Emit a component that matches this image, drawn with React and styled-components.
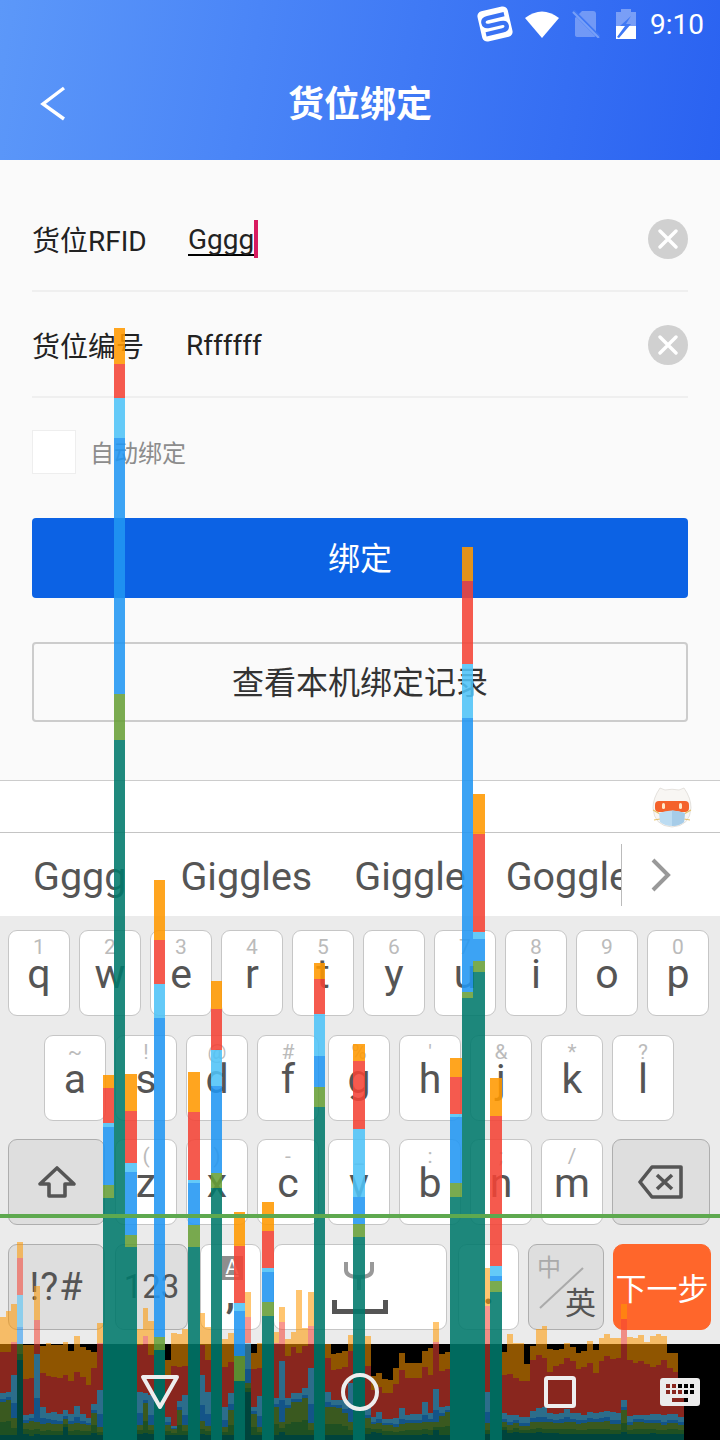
import React from 'react'
import styled, { createGlobalStyle } from 'styled-components'

const GlobalStyle = createGlobalStyle`
    html, body {
        margin: 0;
        padding: 0;
        background: #fafafa;
    }
    body {
        font-family: Roboto, "Noto Sans CJK SC", sans-serif;
    }
`

const Screen = styled.div`
    position: relative;
    width: 720px;
    height: 1440px;
    overflow: hidden;
    background: #fafafa;
    display: flex;
    flex-direction: column;
`

/* header */
const Header = styled.div`
    height: 160px;
    flex-shrink: 0;
    background: linear-gradient(100deg, #5c98f9 0%, #4a85f7 35%, #2a62f1 100%);
    display: flex;
    flex-direction: column;
`
const StatusBar = styled.div`
    height: 48px;
    display: flex;
    align-items: center;
    justify-content: flex-end;
    padding-right: 16px;
    color: #fff;
    svg { display: block; }
`
const Clock = styled.span`
    font-size: 28px;
    margin-left: 14px;
`
const TitleBar = styled.div`
    height: 112px;
    display: flex;
    align-items: center;
    position: relative;
    justify-content: center;
`
const BackIcon = styled.svg`
    position: absolute;
    left: 38px;
    top: 36px;
`
const Title = styled.h1`
    margin: 3px 0 0;
    font-size: 36px;
    font-weight: 700;
    color: #fff;
    line-height: 109px;
`

/* form */
const Form = styled.div`
    height: 620px;
    flex-shrink: 0;
    box-sizing: border-box;
    padding: 26px 32px 0;
    display: flex;
    flex-direction: column;
`
const Row = styled.div`
    height: 102px;
    padding-top: 2px;
    border-bottom: 2px solid #efefef;
    display: flex;
    align-items: center;
    color: #222;
    font-size: 28px;
`
const RowLabel = styled.div`
    width: 154px;
    flex-shrink: 0;
`
const RowValue = styled.div`
    flex: 1;
    display: flex;
    align-items: center;
    padding-left: ${props => props.$pad || 0}px;
`
const Composing = styled.span`
    text-decoration: underline;
    text-decoration-color: #000;
    text-decoration-thickness: 2px;
    text-underline-offset: 5px;
    text-decoration-skip-ink: none;
`
const Caret = styled.span`
    width: 4px;
    height: 38px;
    background: #d81b60;
`
const ClearButton = styled.div`
    width: 40px;
    height: 40px;
    border-radius: 50%;
    background: #d0d0d0;
    display: flex;
    align-items: center;
    justify-content: center;
`
const AutoRow = styled.div`
    display: flex;
    align-items: center;
    margin-top: 32px;
`
const Checkbox = styled.div`
    width: 42px;
    height: 42px;
    background: #fff;
    border: 1px solid #eee;
`
const AutoLabel = styled.span`
    margin-left: 14px;
    margin-bottom: 2px;
    font-size: 24px;
    color: #8c8c8c;
`
const PrimaryButton = styled.div`
    height: 76px;
    padding-bottom: 4px;
    margin-top: 44px;
    background: #0c62e4;
    border-radius: 4px;
    color: #fff;
    font-size: 32px;
    display: flex;
    align-items: center;
    justify-content: center;
`
const OutlineButton = styled.div`
    height: 72px;
    padding-bottom: 4px;
    margin-top: 44px;
    border: 2px solid #ccc;
    border-radius: 4px;
    color: #333;
    font-size: 32px;
    display: flex;
    align-items: center;
    justify-content: center;
`

/* input method */
const ToolStrip = styled.div`
    height: 51px;
    flex-shrink: 0;
    background: #fff;
    border-top: 1px solid #ccc;
    border-bottom: 1px solid #c4c4c4;
    display: flex;
    align-items: center;
    justify-content: flex-end;
    padding-right: 28px;
`
const CandidateBar = styled.div`
    height: 83px;
    flex-shrink: 0;
    background: #fff;
    display: flex;
    align-items: center;
`
const CandidateList = styled.div`
    width: 621px;
    height: 62px;
    overflow: hidden;
    display: flex;
    align-items: center;
    border-right: 1px solid #bbb;
    position: relative;
`
const Candidate = styled.span`
    flex-shrink: 0;
    font-size: 39.5px;
    color: #555;
    padding-top: 4px;
    margin-left: ${props => props.$ml}px;
`
const CandidateMore = styled.div`
    flex: 1;
    display: flex;
    justify-content: center;
    padding-right: 20px;
`
const Keyboard = styled.div`
    height: 428px;
    flex-shrink: 0;
    box-sizing: border-box;
    background: #ebebeb;
    padding-top: 14px;
    display: flex;
    flex-direction: column;
    gap: 18.67px;
`
const KeyRow = styled.div`
    display: flex;
    gap: 9px;
    padding-left: ${props => props.$pad || 8}px;
`
const Key = styled.div`
    position: relative;
    box-sizing: border-box;
    width: ${props => props.$w || 62}px;
    height: 86px;
    margin-left: ${props => props.$ml || 0}px;
    flex-shrink: 0;
    background: ${props => props.$dark ? '#dedede' : '#fff'};
    border: 1px solid ${props => props.$dark ? '#aeaeae' : '#c6c6c6'};
    border-radius: 9px;
    color: #555;
    display: flex;
    flex-direction: column;
    align-items: center;
    justify-content: ${props => props.$center ? 'center' : 'flex-start'};
`
const EnterKey = styled(Key)`
    background: #ff662b;
    border-color: #ff662b;
    color: #fff;
    font-size: 31px;
    justify-content: center;
    border-radius: 10px;
`
const KeyHint = styled.span`
    font-size: 21px;
    line-height: 22px;
    margin-top: 5px;
    color: #bbb;
`
const KeyLetter = styled.span`
    font-size: 41px;
    line-height: 44px;
    margin-top: -6px;
`
const SymbolLabel = styled.span`
    font-size: ${props => props.$size}px;
    letter-spacing: ${props => props.$spacing || 0}px;
`
const LangTop = styled.span`
    position: absolute;
    left: 8px;
    top: 9px;
    font-size: 24px;
    line-height: 28px;
    color: #aaa;
`
const LangBottom = styled.span`
    position: absolute;
    right: 7px;
    bottom: 7px;
    font-size: 31px;
    line-height: 36px;
    color: #555;
`
const LangSlash = styled.svg`
    position: absolute;
    left: 10px;
    top: 22px;
`
const CommaBadge = styled.span`
    width: 21px;
    height: 24px;
    margin: 11px 0 0 3px;
    background: #8e8e8e;
    color: #fff;
    font-size: 20px;
    line-height: 22px;
    text-align: center;
    text-decoration: underline;
`
const CommaLabel = styled.span`
    font-size: 38px;
    line-height: 30px;
    font-weight: 700;
`
const PeriodLabel = styled.span`
    font-size: 36px;
    line-height: 70px;
    margin-top: 12px;
    font-weight: 700;
`

/* navigation bar */
const NavBar = styled.div`
    height: 96px;
    flex-shrink: 0;
    background: #000;
    display: flex;
    align-items: center;
    padding-left: 60px;
`
const NavSlot = styled.div`
    width: 200px;
    display: flex;
    justify-content: center;
    position: relative;
    z-index: 2;
`
const NavKeyboard = styled.svg`
    position: relative;
    z-index: 2;
`

const ProfilerOverlay = styled.svg`
    position: absolute;
    left: 0;
    top: 0;
    z-index: 1;
    pointer-events: none;
`

const SLOT = 5.7
const COLORS = {
    orange: '#ff9800',
    red: '#f44336',
    sky: '#4fc3f7',
    blue: '#2196f3',
    olive: '#689f38',
    green: '#388e3c',
    teal: '#00796b',
}

// frames of the profiler chart, top of each colour [orange, red, sky, olive, teal], measured on a 3x crop from y=1290
const FRAMES = {
    0: [80, 186, 310, 335, 435], 1: [62, 186, 305, 330, 435], 2: [42, 155, 255, 385, 435], 3: [-144, -96, 15, 162, 210],
    4: [165, 268, 375, 398, 432], 5: [165, 265, 372, 392, 437], 6: [-12, 90, 192, 395, 432], 7: [168, 250, 350, 402, 435],
    8: [158, 258, 368, 398, 435], 9: [165, 262, 365, 402, 435], 10: [165, 265, 372, 402, 435], 11: [155, 255, 360, 388, 412],
    12: [182, 272, 372, 402, 435], 13: [138, 245, 348, 400, 435], 14: [170, 262, 372, 402, 435], 15: [180, 285, 385, 405, 435],
    16: [185, 235, 342, 370, 430], 17: [100, 160, 300, 410, 435], 24: [118, 165, 305, 405, 432], 25: [55, 138, 310, 340, 430],
    26: [92, 195, 315, 405, 432], 29: [210, 268, 382, 405, 435], 30: [130, 228, 408, 418, 435], 31: [132, 232, 332, 360, 435],
    32: [118, 228, 315, 405, 435], 35: [70, 165, 255, 392, 432], 36: [112, 210, 305, 408, 435], 39: [148, 232, 352, 410, 435],
    40: [130, 215, 310, 360, 435], 43: [5, 80, 160, 280, 305], 44: [190, 237, 350, 372, 435], 45: [158, 235, 318, 410, 435],
    48: [125, 160, 325, 350, 435], 49: [50, 95, 213, 395, 425], 50: [148, 198, 325, 355, 435], 51: [125, 170, 308, 335, 435],
    52: [0, 188, 310, 335, 435], 53: [115, 168, 295, 325, 435], 54: [5, 108, 235, 400, 435], 57: [162, 205, 305, 352, 435],
    58: [192, 240, 330, 352, 435], 59: [188, 238, 330, 355, 435], 60: [183, 232, 330, 370, 435], 61: [135, 183, 280, 395, 435],
    64: [138, 228, 355, 385, 432], 65: [258, 300, 380, 403, 425], 66: [250, 290, 365, 398, 430], 67: [268, 308, 388, 405, 435],
    68: [270, 310, 388, 405, 435], 69: [235, 282, 385, 410, 435], 70: [190, 240, 353, 403, 435], 71: [220, 265, 375, 398, 435],
    72: [220, 265, 372, 398, 435], 73: [220, 265, 372, 398, 435], 74: [183, 232, 335, 395, 432], 75: [175, 255, 370, 395, 435],
    76: [97, 155, 297, 395, 420], 77: [192, 243, 352, 378, 435], 78: [187, 238, 348, 365, 435], 85: [-66, 48, 305, 400, 432],
    88: [185, 255, 368, 395, 420], 89: [132, 252, 375, 405, 430], 90: [158, 265, 375, 400, 425], 91: [160, 272, 380, 408, 430],
    92: [222, 272, 380, 408, 430], 93: [168, 210, 362, 395, 430], 94: [118, 195, 355, 395, 425], 95: [108, 205, 352, 395, 430],
    96: [178, 245, 368, 395, 430], 97: [180, 228, 372, 398, 430], 98: [178, 222, 368, 398, 432], 99: [160, 204, 358, 395, 432],
    100: [172, 212, 370, 395, 432], 101: [188, 237, 370, 402, 432], 102: [183, 232, 375, 400, 432], 103: [153, 218, 365, 395, 432],
    104: [180, 248, 368, 395, 432], 105: [145, 212, 365, 395, 432], 106: [132, 198, 362, 392, 432], 107: [145, 208, 367, 402, 432],
    108: [145, 204, 370, 402, 432], 109: [42, 88, 330, 360, 425], 110: [140, 210, 378, 405, 432], 111: [145, 218, 375, 395, 432],
    112: [135, 212, 375, 395, 432], 113: [155, 222, 375, 398, 432], 114: [138, 232, 372, 398, 430], 115: [132, 225, 372, 400, 432],
    116: [138, 210, 375, 405, 432], 117: [188, 235, 372, 398, 432], 118: [188, 245, 372, 398, 432], 119: [300, 300, 382, 405, 432],
}

// janky frames are two slots wide and nearly opaque: [slot, orange, red, sky, blue, olive, teal] in page pixels
const JANK = [
    [18, 1075, 1088, 1123, 1127, 1185, 1198],
    [20, 328, 364, 398, 438, 694, 740],
    [22, 1074, 1111, 1163, 1172, 1235, 1247],
    [27, 880, 940, 984, 1018, 1337, 1350],
    [33, 1072, 1112, 1180, 1183, 1225, 1247],
    [37, 981, 1009, 1050, 1086, 1173, 1188],
    [41, 1212, 1246, 1303, 1311, 1356, 1381],
    [46, 1202, 1231, 1268, 1272, 1302, 1316],
    [55, 963, 979, 1014, 1056, 1087, 1107],
    [62, 1044, 1061, 1129, 1197, 1224, 1237],
    [79, 1058, 1077, 1114, 1117, 1183, 1197],
    [81, 547, 581, 664, 718, 992, 998],
    [83, 794, 834, 932, 939, 961, 972],
    [86, 1078, 1116, 1266, 1276, 1281, 1292],
]

const toPage = v => 1290 + v / 3

const frameLayers = ([o, r, b, g, t]) => {
    const skyEnd = b + (g - b) * 0.65
    const oliveEnd = g + (t - g) * 0.6
    return [
        ['orange', o, r],
        ['red', r, b],
        ['sky', b, skyEnd],
        ['blue', skyEnd, g],
        ['olive', g, oliveEnd],
        ['green', oliveEnd, t],
        ['teal', t, 450],
    ].map(([color, from, to]) => [color, toPage(from), toPage(to)])
}

const Profiler = () => (
    <ProfilerOverlay width="720" height="1440" shapeRendering="crispEdges">
        {Object.entries(FRAMES).map(([slot, frame]) => (
            frameLayers(frame).map(([color, from, to]) => (
                <rect key={slot + color} x={slot * SLOT} y={from} width={SLOT} height={to - from} fill={COLORS[color]} fillOpacity="0.56" />
            ))
        ))}
        {JANK.map(([slot, o, r, s, b, g, t]) => (
            [['orange', o, r], ['red', r, s], ['sky', s, b], ['blue', b, g], ['olive', g, t], ['teal', t, 1440]].map(([color, from, to]) => (
                <rect key={slot + color} x={slot * SLOT} y={from} width={SLOT * 2} height={to - from} fill={COLORS[color]} fillOpacity="0.88" />
            ))
        ))}
        <rect x="0" y="1214" width="720" height="4" fill="#5ea94f" />
    </ProfilerOverlay>
)

const SogouLogo = () => (
    <svg width="38" height="38" viewBox="0 0 38 38">
        <g transform="rotate(-13 19 19)">
            <rect x="3.5" y="3.5" width="31" height="31" rx="5" fill="#fff" />
            <path d="M30 11.5 H13 Q8 11.5 8 15.5 Q8 19.5 13 19.5 H25 Q30 19.5 30 23 Q30 27 25 27 H8" fill="none" stroke="#3a72f3" strokeWidth="4.4" />
        </g>
    </svg>
)
const WifiIcon = () => (
    <svg width="36" height="28" viewBox="0 0 36 28" style={{ marginLeft: 10 }}>
        <path d="M1 8 Q18 -5 35 8 L18 28 Z" fill="#fff" />
    </svg>
)
const SimIcon = () => (
    <svg width="28" height="28" viewBox="0 0 28 28" style={{ marginLeft: 12 }}>
        <path d="M10 1 H21 Q24 1 24 4 V25 Q24 27 21 27 H6 Q3 27 3 25 V8 Z" fill="#fff" fillOpacity="0.3" />
        <path d="M1 1 L27 27" stroke="#3f78f4" strokeWidth="4" />
        <path d="M1 2 L27 28" stroke="#fff" strokeOpacity="0.3" strokeWidth="2" />
    </svg>
)
const BatteryIcon = () => (
    <svg width="20" height="30" viewBox="0 0 20 30" style={{ marginLeft: 16 }}>
        <path d="M5 0 H15 V3 H20 V17 H0 V3 H5 Z" fill="#fff" fillOpacity="0.35" />
        <rect x="0" y="17" width="20" height="13" fill="#fff" />
        <path d="M15 7 L4 17 H9 L1 28 L3 29 L15 15 H10 Z" fill="#3f78f4" />
    </svg>
)

const ClearIcon = () => (
    <svg width="20" height="20" viewBox="0 0 20 20">
        <path d="M2 2 L18 18 M18 2 L2 18" stroke="#fff" strokeWidth="3.4" strokeLinecap="round" />
    </svg>
)

const Mascot = () => (
    <svg width="40" height="42" viewBox="0 0 40 42">
        <path d="M8 2 L13 4 Q20 2.5 27 4 L32 2 Q39 12 39 22 Q38 40 20 41 Q2 40 1 22 Q1 12 8 2 Z" fill="#f8f6f3" stroke="#dedad6" strokeWidth="0.8" />
        <rect x="3" y="15" width="34" height="11" rx="4" fill="#f4622b" />
        <rect x="10" y="17" width="3" height="6" rx="1.5" fill="#ffe8c8" />
        <rect x="27" y="17" width="3" height="6" rx="1.5" fill="#ffe8c8" />
        <path d="M1 24 L8 28 M39 24 L32 28 M2 34 L8 33 M38 34 L32 33" stroke="#e5c06a" strokeWidth="1.2" />
        <path d="M7 27 Q20 22 33 27 L32 36 Q27 40 20 40 Q13 40 8 36 Z" fill="#bcdcf2" />
        <path d="M20 24.5 V40 Q27 40 32 36 L33 27 Q27 25 20 24.5 Z" fill="#a6cce8" />
    </svg>
)

const ShiftIcon = () => (
    <svg width="40" height="34" viewBox="0 0 40 34">
        <path d="M20 3 L37 19 H28 V31 H12 V19 H3 Z" fill="none" stroke="#555" strokeWidth="3.6" strokeLinejoin="round" />
    </svg>
)
const DeleteIcon = () => (
    <svg width="46" height="34" viewBox="0 0 46 34">
        <path d="M14 2 H43 V32 H14 L2 17 Z" fill="none" stroke="#555" strokeWidth="3.6" strokeLinejoin="round" />
        <path d="M19 10 L34 24 M34 10 L19 24" stroke="#555" strokeWidth="3.6" />
    </svg>
)
const SpaceIcon = () => (
    <svg width="56" height="54" viewBox="0 0 56 54">
        <path d="M14 2 V10 Q14 17 27 17 Q40 17 40 10 V2" fill="none" stroke="#999" strokeWidth="4" />
        <path d="M27 17 V30" stroke="#999" strokeWidth="4" />
        <path d="M2.5 40 V51.5 H53.5 V40" fill="none" stroke="#555" strokeWidth="5" />
    </svg>
)

const rows = [
    [['q', '1'], ['w', '2'], ['e', '3'], ['r', '4'], ['t', '5'], ['y', '6'], ['u', '7'], ['i', '8'], ['o', '9'], ['p', '0']],
    [['a', '~'], ['s', '!'], ['d', '@'], ['f', '#'], ['g', '%'], ['h', "'"], ['j', '&'], ['k', '*'], ['l', '?']],
    [['z', '('], ['x', ')'], ['c', '-'], ['v', '_'], ['b', ':'], ['n', ';'], ['m', '/']],
]

const LetterKey = ({ letter, hint }) => (
    <Key>
        <KeyHint>{hint}</KeyHint>
        <KeyLetter>{letter}</KeyLetter>
    </Key>
)

const App = () => {
    return (
        <Screen>
            <GlobalStyle />
            <Header>
                <StatusBar>
                    <SogouLogo />
                    <WifiIcon />
                    <SimIcon />
                    <BatteryIcon />
                    <Clock>9:10</Clock>
                </StatusBar>
                <TitleBar>
                    <BackIcon width="30" height="40" viewBox="0 0 30 40">
                        <path d="M26 4 L5 20 L26 35" fill="none" stroke="#fff" strokeWidth="3.4" />
                    </BackIcon>
                    <Title>货位绑定</Title>
                </TitleBar>
            </Header>

            <Form>
                <Row>
                    <RowLabel>货位RFID</RowLabel>
                    <RowValue $pad={2}>
                        <Composing>Gggg</Composing>
                        <Caret />
                    </RowValue>
                    <ClearButton><ClearIcon /></ClearButton>
                </Row>
                <Row>
                    <RowLabel>货位编号</RowLabel>
                    <RowValue>Rffffff</RowValue>
                    <ClearButton><ClearIcon /></ClearButton>
                </Row>
                <AutoRow>
                    <Checkbox />
                    <AutoLabel>自动绑定</AutoLabel>
                </AutoRow>
                <PrimaryButton>绑定</PrimaryButton>
                <OutlineButton>查看本机绑定记录</OutlineButton>
            </Form>

            <ToolStrip><Mascot /></ToolStrip>
            <CandidateBar>
                <CandidateList>
                    <Candidate $ml={33}>Gggg</Candidate>
                    <Candidate $ml={54}>Giggles</Candidate>
                    <Candidate $ml={42}>Giggle</Candidate>
                    <Candidate $ml={40}>Goggle</Candidate>
                </CandidateList>
                <CandidateMore>
                    <svg width="24" height="36" viewBox="0 0 24 36">
                        <path d="M4 3 L19 18 L4 33" fill="none" stroke="#999" strokeWidth="4" />
                    </svg>
                </CandidateMore>
            </CandidateBar>

            <Keyboard>
                <KeyRow>
                    {rows[0].map(([letter, hint]) => <LetterKey key={letter} letter={letter} hint={hint} />)}
                </KeyRow>
                <KeyRow $pad={44}>
                    {rows[1].map(([letter, hint]) => <LetterKey key={letter} letter={letter} hint={hint} />)}
                </KeyRow>
                <KeyRow>
                    <Key $w={97} $dark $center><ShiftIcon /></Key>
                    <Key $ml={1}>
                        <KeyHint>{rows[2][0][1]}</KeyHint>
                        <KeyLetter>{rows[2][0][0]}</KeyLetter>
                    </Key>
                    {rows[2].slice(1).map(([letter, hint]) => <LetterKey key={letter} letter={letter} hint={hint} />)}
                    <Key $w={98} $dark $center><DeleteIcon /></Key>
                </KeyRow>
                <KeyRow>
                    <Key $w={97} $dark $center><SymbolLabel $size={38} $spacing={1}>!?#</SymbolLabel></Key>
                    <Key $w={73} $ml={1} $dark $center><SymbolLabel $size={33}>123</SymbolLabel></Key>
                    <Key $w={61} $ml={3}>
                        <CommaBadge>A</CommaBadge>
                        <CommaLabel>,</CommaLabel>
                    </Key>
                    <Key $w={174} $ml={3} $center><SpaceIcon /></Key>
                    <Key $w={61} $ml={2}><PeriodLabel>.</PeriodLabel></Key>
                    <Key $w={76} $dark>
                        <LangTop>中</LangTop>
                        <LangSlash width="46" height="42" viewBox="0 0 46 42">
                            <path d="M1 41 L44 1" stroke="#aaa" strokeWidth="2" />
                        </LangSlash>
                        <LangBottom>英</LangBottom>
                    </Key>
                    <EnterKey $w={98}>下一步</EnterKey>
                </KeyRow>
            </Keyboard>

            <NavBar>
                <NavSlot>
                    <svg width="40" height="36" viewBox="0 0 40 36">
                        <path d="M3 3 H37 L20 33 Z" fill="none" stroke="#eee" strokeWidth="4" strokeLinejoin="round" />
                    </svg>
                </NavSlot>
                <NavSlot>
                    <svg width="38" height="38" viewBox="0 0 38 38">
                        <circle cx="19" cy="19" r="17" fill="none" stroke="#eee" strokeWidth="4" />
                    </svg>
                </NavSlot>
                <NavSlot>
                    <svg width="34" height="34" viewBox="0 0 34 34">
                        <rect x="3" y="3" width="28" height="28" rx="1.5" fill="none" stroke="#eee" strokeWidth="4" />
                    </svg>
                </NavSlot>
                <NavKeyboard width="40" height="28" viewBox="0 0 40 28">
                    <path
                        fillRule="evenodd"
                        fill="#ececec"
                        d="M3 0 H37 Q40 0 40 3 V25 Q40 28 37 28 H3 Q0 28 0 25 V3 Q0 0 3 0 Z
                           M6 6 h4 v4 h-4 Z M12 6 h4 v4 h-4 Z M18 6 h4 v4 h-4 Z M24 6 h4 v4 h-4 Z M30 6 h4 v4 h-4 Z
                           M6 12 h4 v4 h-4 Z M12 12 h4 v4 h-4 Z M18 12 h4 v4 h-4 Z M24 12 h4 v4 h-4 Z M30 12 h4 v4 h-4 Z
                           M12 20 h16 v4 h-16 Z"
                    />
                </NavKeyboard>
            </NavBar>

            <Profiler />
        </Screen>
    )
}

export default App
